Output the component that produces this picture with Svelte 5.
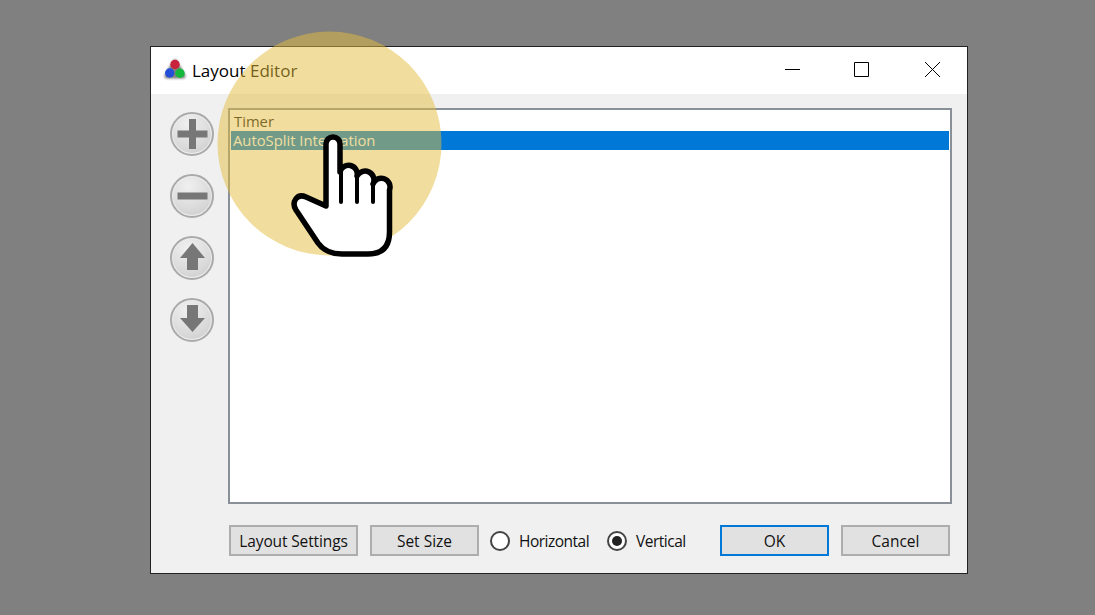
<script>
  const moves = [
    { name: 'add', d: 'M19 7h7v11.500h11.500v7H26V37h-7V25.500H7.500v-7H19z' },
    { name: 'remove', d: 'M7.500 18.500h30v7h-30z' },
    { name: 'up', d: 'M22.500 7 35 22h-7v12H17V22h-7z' },
    { name: 'down', d: 'M17 7h11v13h7L22.500 34 10 20h7z' }
  ]
  const rows = ['Timer', 'AutoSplit Integration']
  let selected = $state(1)
  let orientation = $state('vertical')
</script>

<div class="page">
  <div class="window">
    <header class="titlebar">
      <svg class="logo" width="24" height="24" viewBox="0 0 24 24">
        <path class="halo" d="M12 4 20 18H4z" fill="#555" stroke="#555" stroke-width="5" stroke-linejoin="round" />
        <circle cx="12" cy="6.500" r="4.700" fill="#c8223c" />
        <circle cx="6.700" cy="15" r="4.700" fill="#2450d8" />
        <circle cx="17" cy="15.200" r="4.700" fill="#16b83c" />
      </svg>
      <span class="title">Layout Editor</span>
      <div class="controls">
        <svg width="20" height="20" viewBox="0 0 20 20"><path d="M1 10.500h15" stroke="#000" /></svg>
        <svg width="20" height="20" viewBox="0 0 20 20"><path d="M1.500 3.500h14v14h-14z" fill="none" stroke="#000" /></svg>
        <svg width="20" height="20" viewBox="0 0 20 20"><path d="M3 3l15 15M18 3 3 18" stroke="#000" /></svg>
      </div>
    </header>

    <div class="client">
      <div class="main">
        <div class="moves">
          {#each moves as m}
            <button class="glass" aria-label={m.name}>
              <svg width="44" height="44" viewBox="0 0 44 44"><path d={m.d} fill="#777" /></svg>
            </button>
          {/each}
        </div>
        <ul class="list">
          {#each rows as row, i}
            <li class:selected={i === selected}>{row}</li>
          {/each}
        </ul>
      </div>

      <footer class="actions">
        <button class="btn wide">Layout Settings</button>
        <button class="btn size">Set Size</button>
        <label class="radio horizontal">
          <input type="radio" bind:group={orientation} value="horizontal" />
          <span class="dot"></span>Horizontal
        </label>
        <label class="radio vertical">
          <input type="radio" bind:group={orientation} value="vertical" />
          <span class="dot"></span>Vertical
        </label>
        <button class="btn default">OK</button>
        <button class="btn">Cancel</button>
      </footer>
    </div>
  </div>

  <svg class="pointer" width="1095" height="615" viewBox="0 0 1095 615">
    <circle cx="329.500" cy="143.500" r="112" fill="rgb(228 188 60 / .5)" />
    <path
      d="M326 206V144A7 7 0 0 1 340 144V172A8 8 0 0 1 357 176A8 8 0 0 1 373 184A8.500 8.500 0 0 1 389.500 190V232Q389.500 254 368 254H342Q326 254 318 243L296 210C291 202 297 193 306 197Z"
      fill="#fff" stroke="#000" stroke-width="5.500" stroke-linejoin="round"
    />
    <path d="M341 165V202M357 176V202M373 184V202" fill="none" stroke="#000" stroke-width="4" stroke-linecap="round" />
  </svg>
</div>

<style>
  :global(body) { background: #808080; }
  .page {
    position: relative;
    width: 1095px;
    height: 615px;
    padding: 46px 0 0 150px;
    box-sizing: border-box;
    font-family: "Open Sans", "Noto Sans", sans-serif;
    font-size: 15.5px;
    color: #111;
    overflow: hidden;
  }
  .window {
    width: 818px;
    height: 528px;
    box-sizing: border-box;
    border: 1px solid #222;
    display: flex;
    flex-direction: column;
    background: #f0f0f0;
  }
  .titlebar {
    height: 47px;
    flex: none;
    background: #fff;
    display: flex;
    align-items: center;
    padding: 0 25px 0 12px;
  }
  .logo { margin-right: 5px; margin-top: -2px; overflow: visible; }
  .halo { filter: blur(1px); opacity: .75; }
  .title { font-size: 17px; color: #000; }
  .controls { margin-left: auto; margin-top: -4px; display: flex; gap: 49px; }
  .controls svg { display: block; }

  .client { flex: 1; display: flex; flex-direction: column; padding: 14px 15px 17px 19px; }
  .main { flex: 1; display: flex; gap: 14px; min-height: 0; }
  .moves { width: 44px; padding-top: 4px; display: flex; flex-direction: column; gap: 18px; }
  .glass {
    width: 44px;
    height: 44px;
    padding: 0;
    border: 2px solid #aaa;
    border-radius: 50%;
    box-sizing: border-box;
    background: radial-gradient(circle at 40% 25%, #f0f0f0, #dadada 60%, #c8c8c8);
    box-shadow: inset 0 0 0 1px #eee;
    display: flex;
    align-items: center;
    justify-content: center;
    flex: none;
    filter: blur(.4px);
  }
  .glass svg { flex: none; margin: -2px; filter: blur(.7px); }

  .list {
    flex: 1;
    margin: 0;
    padding: 2px 1px;
    list-style: none;
    background: #fff;
    border: 2px solid #8a9098;
    line-height: 19px;
    font-size: 14.8px;
  }
  .list li { padding-left: 2px; height: 19px; }
  .list li:first-child { padding-left: 3px; height: 18.500px; }
  .selected { background: #0078d7; color: #fff; }

  .actions { flex: none; display: flex; align-items: center; height: 31px; margin-top: 21px; padding-left: 59px; }
  .btn {
    width: 109px;
    height: 31px;
    padding: 0;
    font: inherit;
    color: inherit;
    background: #e1e1e1;
    border: 2px solid #adadad;
    box-sizing: border-box;
  }
  .wide { width: 129px; margin-right: 12px; letter-spacing: -.13px; }
  .size { margin-right: 11px; }
  .default { border-color: #0078d7; margin-right: 12px; }
  .radio { display: flex; align-items: center; letter-spacing: -.5px; }
  .radio input { position: absolute; opacity: 0; }
  .horizontal { width: 108px; margin-right: 9px; }
  .vertical { width: 113px; margin-right: 0; }
  .dot {
    width: 20px;
    height: 20px;
    box-sizing: border-box;
    border: 2px solid #444;
    border-radius: 50%;
    background: #fff;
    margin-right: 9px;
    display: flex;
    align-items: center;
    justify-content: center;
  }
  input:checked + .dot::after {
    content: '';
    width: 10px;
    height: 10px;
    border-radius: 50%;
    background: #222;
  }
  .pointer { position: absolute; left: 0; top: 0; pointer-events: none; }
</style>
